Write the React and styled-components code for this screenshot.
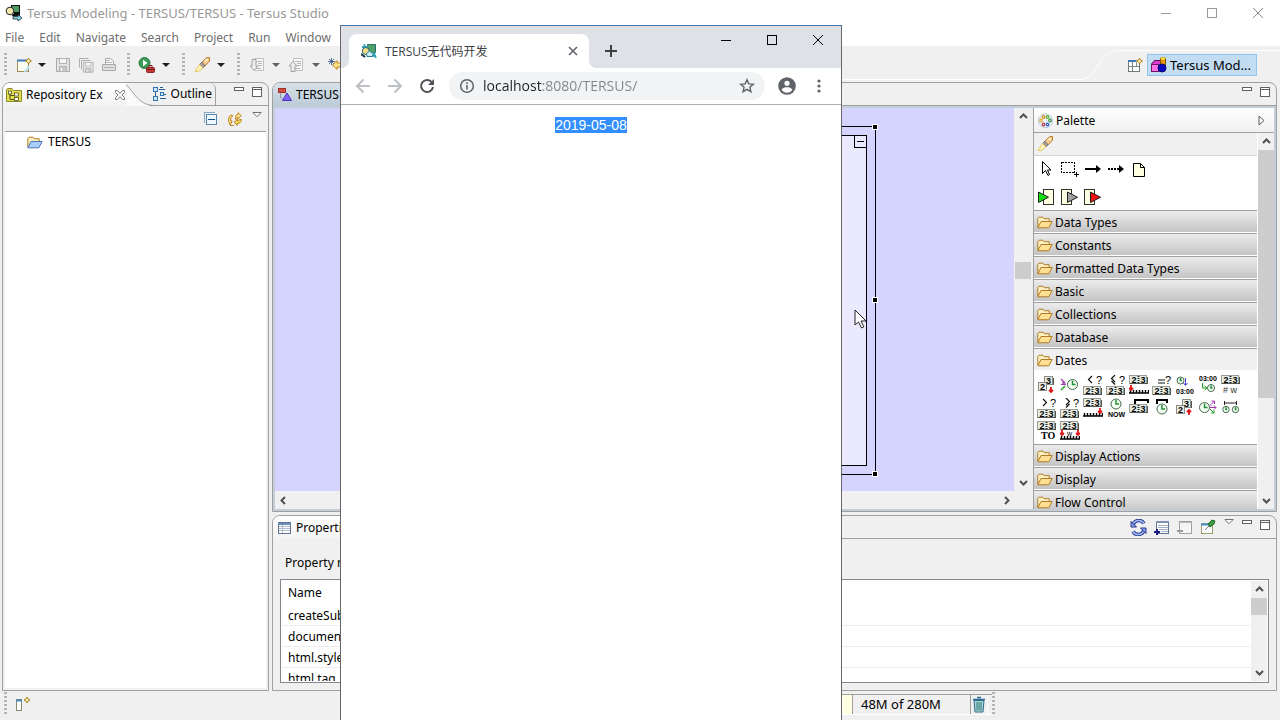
import React from "react";
import styled, { createGlobalStyle, css } from "styled-components";

const ui = `"Noto Sans", "Open Sans", "Noto Sans CJK SC", sans-serif`;
const line = "#a0a0a0";
const face = "#f0f0f0";

const Global = createGlobalStyle`
  * { box-sizing: border-box; }
  body { margin: 0; overflow: hidden; background: ${face}; font: 12px/16px ${ui}; color: #000; }
  button { font: inherit; color: inherit; padding: 0; margin: 0; border: 0; background: none; }
  svg { display: block; flex: none; }
`;

/* ---------- frame ---------- */
const Screen = styled.div`
  position: relative;
  display: flex;
  flex-direction: column;
  height: 100vh;
  overflow: hidden;
  background: ${face};
`;
const TitleBar = styled.header`
  display: flex;
  align-items: center;
  height: 26px;
  padding: 0 16px 0 5px;
  background: #fff;
  color: #999;
`;
const Title = styled.h1`
  flex: 1;
  margin: 0 0 0 4px;
  font-size: 13px;
  font-weight: 400;
`;
const WindowButtons = styled.div`
  display: flex;
  align-self: ${(p) => (p.$top ? "flex-start" : "center")};
  gap: 34px;
`;
const MenuBar = styled.nav`
  display: flex;
  align-items: center;
  gap: 15px;
  height: 20px;
  padding: 4px 5px 0;
  background: #fff;
  color: #6d6d6d;
`;
const MenuItem = styled.button`
  height: 16px;
`;
const CoolBar = styled.div`
  display: flex;
  height: 36px;
`;
const Tools = styled.div`
  display: flex;
  align-items: center;
  padding: 2px 0 0 4px;
`;
const Tool = styled.button`
  display: flex;
  align-items: center;
  justify-content: center;
  width: ${(p) => p.$w || 23}px;
  height: 20px;
`;
const Grip = styled.span`
  width: 3px;
  height: 24px;
  margin-right: ${(p) => p.$after || 8}px;
  background: repeating-linear-gradient(#b4b4b4 0 2px, transparent 2px 4px);
`;
const CoolLine = styled.div`
  flex: 1;
  height: 34px;
  border-bottom: 1px solid #fff;
`;
const Perspectives = styled.div`
  display: flex;
  align-items: center;
  gap: 4px;
  height: 28px;
  margin-top: 4px;
  padding: 0 23px 0 9px;
  border-top: 1px solid #fff;
`;
const Perspective = styled.button`
  display: flex;
  align-items: center;
  gap: 3px;
  height: 22px;
  padding: 0 5px 0 2px;
  border: 1px solid #92c5ee;
  background: #c2dcf2;
  font-size: 13px;
  white-space: nowrap;
`;
const Workbench = styled.main`
  display: grid;
  grid-template-columns: 267px minmax(0, 1fr);
  gap: 3px;
  flex: 1;
  min-height: 0;
  padding: 0 3px 0 2px;
`;
const RightSide = styled.div`
  display: flex;
  flex-direction: column;
  gap: 3px;
  min-height: 0;
`;
const Panel = styled.section`
  display: flex;
  flex-direction: column;
  flex: ${(p) => (p.$h ? `0 0 ${p.$h}px` : "1")};
  min-height: 0;
  overflow: hidden;
  border: 1px solid ${line};
  border-radius: 8px 8px 0 0;
  background: ${face};
`;
const PanelHead = styled.div`
  display: flex;
  flex: none;
  height: 23px;
`;
const Tab = styled.button`
  display: flex;
  align-items: center;
  gap: ${(p) => p.$gap || 4}px;
  height: 23px;
  padding: 0 ${(p) => p.$right || 0}px 0 ${(p) => p.$left || 3}px;
  white-space: nowrap;
  ${(p) => p.$active && css`background: linear-gradient(#fff, #f3f3f3);`}
  ${(p) => p.$editor && css`background: linear-gradient(#d7e1e9, #bccbd7);`}
`;
const TabCurve = styled.svg`
  margin: 0 -6px 0 0;
`;
const OutlineTab = styled(Tab)`
  padding-right: 3px;
  border-right: 1px solid ${line};
  border-bottom: 1px solid ${line};
  border-top-right-radius: 6px;
`;
const HeadActions = styled.div`
  display: flex;
  flex: 1;
  justify-content: flex-end;
  gap: 8px;
  padding: 3px 6px 0 0;
  border-bottom: 1px solid ${line};
`;
const ViewActions = styled.div`
  display: flex;
  gap: 7px;
`;
const ViewBar = styled.div`
  display: flex;
  flex: none;
  justify-content: flex-end;
  gap: 10px;
  height: 26px;
  margin: 0 2px;
  padding: 6px 4px 0 0;
  border-bottom: 1px solid ${line};
`;
const Tree = styled.ul`
  flex: 1;
  margin: 0 2px 2px;
  padding: 1px 0 0 22px;
  background: #fff;
  list-style: none;
`;
const TreeItem = styled.li`
  display: flex;
  align-items: center;
  gap: 5px;
  height: 18px;
`;

/* ---------- editor ---------- */
const EditorBody = styled.div`
  display: grid;
  grid-template-columns: minmax(0, 1fr) 241px;
  flex: 1;
  min-height: 0;
  padding: 2px;
  background: #c3ced9;
`;
const Diagram = styled.div`
  display: grid;
  grid-template-columns: minmax(0, 1fr) 19px;
  grid-template-rows: minmax(0, 1fr) 18px;
  min-height: 0;
  background: ${face};
`;
const Canvas = styled.div`
  position: relative;
  overflow: hidden;
  background: #d5d4ff;
`;
const Node = styled.div`
  position: absolute;
  left: ${(p) => p.$x}px;
  top: ${(p) => p.$y}px;
  width: ${(p) => p.$w}px;
  height: ${(p) => p.$h}px;
  border: 1px solid #000;
  background: ${(p) => p.$fill || "transparent"};
`;
const Collapse = styled.button`
  position: absolute;
  right: -1px;
  top: -1px;
  display: grid;
  place-items: center;
  width: 13px;
  height: 13px;
  border: 1px solid #000;
`;
const Handle = styled.span`
  position: absolute;
  left: ${(p) => p.$x}px;
  top: ${(p) => p.$y}px;
  width: 6px;
  height: 6px;
  border: 1px solid #fff;
  background: #000;
`;
const Scroll = styled.div`
  display: flex;
  flex-direction: ${(p) => (p.$row ? "row" : "column")};
  justify-content: space-between;
  flex: none;
  width: ${(p) => (p.$row ? "auto" : "16px")};
  margin: ${(p) => p.$m || "0"};
  background: ${face};
`;
const ScrollButton = styled.button`
  display: grid;
  place-items: center;
  flex: none;
  width: 16px;
  height: 17px;
`;
const ScrollTrack = styled.div`
  display: grid;
  flex: 1;
  grid-template-rows: ${(p) => p.$rows || "1fr"};
`;
const Thumb = styled.div`
  grid-row: 2;
  background: #cdcdcd;
`;

/* ---------- palette ---------- */
const Palette = styled.aside`
  display: flex;
  flex-direction: column;
  min-height: 0;
  border-left: 1px solid ${line};
  background: #fff;
`;
const PaletteHead = styled.div`
  display: flex;
  align-items: center;
  gap: 2px;
  flex: none;
  height: 25px;
  padding: 1px 8px 0 4px;
  border-bottom: 1px solid ${line};
  background: linear-gradient(#fff, ${face});
`;
const Grow = styled.span`
  flex: 1;
  min-width: ${(p) => p.$min || 0}px;
`;
const PaletteBody = styled.div`
  display: flex;
  flex: 1;
  min-height: 0;
`;
const Drawers = styled.div`
  flex: 1;
  overflow: hidden;
`;
const BrushRow = styled.div`
  height: 23px;
  padding: 3px;
  border-bottom: 1px solid #d4d4d4;
  background: ${face};
`;
const ToolSet = styled.div`
  display: grid;
  gap: 7px;
  height: 54px;
  padding: 3px;
`;
const ToolRow = styled.div`
  display: flex;
  gap: 3px;
`;
const IconGrid = styled.div`
  display: flex;
  flex-wrap: wrap;
  align-content: flex-start;
  gap: 3px;
  height: 73px;
  padding: 4px 3px 0;
`;
const IconButton = styled.button`
  width: 20px;
  height: 20px;
`;
const Drawer = styled.button`
  display: flex;
  align-items: center;
  gap: 2px;
  width: 100%;
  height: 23px;
  padding: 2px 0 0 3px;
  border-top: 1px solid ${line};
  border-bottom: 1px solid #fff;
  background: ${(p) => (p.$open ? face : "linear-gradient(#ececec, #c4c4c4)")};
`;

/* ---------- properties ---------- */
const FilterLabel = styled.p`
  flex: none;
  margin: 0;
  padding: 16px 0 8px 12px;
`;
const TableFrame = styled.div`
  display: flex;
  flex: 1;
  min-height: 0;
  margin: 0 7px 7px;
  padding: 1px;
  overflow: hidden;
  border: 1px solid #828790;
  background: #fff;
`;
const TableClip = styled.div`
  flex: 1;
  overflow: hidden;
`;
const Table = styled.table`
  width: 100%;
  border-collapse: collapse;
  th, td { padding: 0 0 0 6px; text-align: left; font-weight: 400; height: 21px; }
  th { height: 23px; }
  td { padding-top: 3px; border-bottom: 1px solid #ececec; }
`;

/* ---------- status bar ---------- */
const StatusBar = styled.footer`
  display: flex;
  align-items: center;
  height: 29px;
  padding: 0 284px 3px 4px;
`;
const Heap = styled.div`
  display: flex;
  height: 21px;
  border-top: 1px solid ${line};
  border-bottom: 1px solid #fff;
`;
const HeapUsed = styled.span`
  width: 60px;
  border-right: 1px solid ${line};
  background: #ffffe1;
`;
const HeapText = styled.span`
  width: 118px;
  padding: 1px 0 0 8px;
  border-right: 1px solid ${line};
  font-size: 13px;
`;
const Trash = styled.button`
  width: 17px;
  padding: 1px 1px 0;
  margin-right: 4px;
  border-right: 1px solid #fff;
`;

/* ---------- browser ---------- */
const Browser = styled.section`
  position: absolute;
  left: 340px;
  top: 25px;
  bottom: 0;
  width: 502px;
  display: flex;
  flex-direction: column;
  border: 1px solid #68686c;
  border-top-color: #3c78b4;
  border-bottom: 0;
  background: #fff;
  font-family: "Open Sans", "Noto Sans CJK SC", sans-serif;
`;
const Strip = styled.div`
  display: flex;
  flex: none;
  height: 42px;
  padding: 8px 17px 0 0;
  background: #dee1e6;
`;
const Foot = styled.span`
  align-self: flex-end;
  width: 8px;
  height: 8px;
  background: radial-gradient(circle at ${(p) => (p.$right ? "100%" : "0")} 0, #dee1e6 8px, #fff 8px);
`;
const BrowserTab = styled.div`
  display: flex;
  align-items: center;
  width: 240px;
  height: 34px;
  padding: 0 10px 0 12px;
  border-radius: 8px 8px 0 0;
  background: #fff;
  color: #3c4043;
`;
const TabTitle = styled.span`
  flex: 1;
  margin-left: 8px;
  padding-top: 2px;
`;
const NewTab = styled.button`
  height: 34px;
  margin-left: 8px;
`;
const NavBar = styled.div`
  display: flex;
  align-items: center;
  flex: none;
  height: 37px;
  padding: 0 14px;
  border-bottom: 1px solid #b0b0b2;
`;
const NavButton = styled.button`
  margin: 0 ${(p) => p.$after || 0}px 0 ${(p) => p.$before || 0}px;
`;
const Omnibox = styled.label`
  display: flex;
  align-items: center;
  flex: 1;
  height: 28px;
  padding: 0 10px;
  border-radius: 14px;
  background: #f1f3f4;
`;
const Url = styled.input`
  flex: 1;
  min-width: 0;
  margin: 0 0 0 8px;
  padding: 0;
  border: 0;
  outline: 0;
  background: linear-gradient(90deg, #202124 60px, #80868b 60px);
  -webkit-background-clip: text;
  background-clip: text;
  -webkit-text-fill-color: transparent;
  font: 14px/20px "Open Sans", sans-serif;
`;
const Page = styled.div`
  padding-top: 12px;
  text-align: center;
  font: 14px/16px "Liberation Sans", Arial, sans-serif;
`;
const Selected = styled.span`
  background: #338fff;
  color: #fff;
`;
const Pointer = styled.svg`
  position: absolute;
  left: 854px;
  top: 309px;
`;

/* ---------- icons ---------- */
const Svg = ({ w = 16, h = 16, crisp, children, ...rest }) => (
  <svg width={w} height={h} viewBox={`0 0 ${w} ${h}`} fill="none" shapeRendering={crisp ? "crispEdges" : undefined} aria-hidden="true" {...rest}>
    {children}
  </svg>
);
const WinMin = ({ c }) => <Svg w={12} h={12} crisp><path d="M1 6.5h10" stroke={c} /></Svg>;
const WinMax = ({ c }) => <Svg w={12} h={12} crisp><rect x="1.500" y="1.500" width="9" height="9" stroke={c} /></Svg>;
const WinClose = ({ c }) => <Svg w={12} h={12}><path d="M1 1l10 10M11 1L1 11" stroke={c} /></Svg>;
const Caret = ({ c = "#202020" }) => <Svg w={8} h={4}><path d="M0 0h8L4 4z" fill={c} /></Svg>;
const MinView = () => <Svg w={10} h={13} crisp><rect x=".5" y="1.500" width="9" height="3" fill="#fff" stroke="#606060" /></Svg>;
const MaxView = () => <Svg w={10} h={13} crisp><rect x=".5" y="1.500" width="9" height="9" fill="#fff" stroke="#606060" /><path d="M0 3.500h10" stroke="#606060" /></Svg>;
const ViewMenu = () => <Svg w={10} h={6}><path d="M.8.5h8.400L5 4.700z" fill="#fff" stroke="#707070" /></Svg>;
const Chevron = ({ d = 0 }) => (
  <Svg w={9} h={9}><g transform={`rotate(${d} 4.500 4.500)`}><path d="M1 6l3.500-3.500L8 6" stroke="#505050" strokeWidth="2" /></g></Svg>
);
const AppIcon = () => (
  <Svg w={18} h={18}>
    <rect x="6.500" y="1.500" width="8" height="7" fill="#4f9a62" stroke="#111" />
    <circle cx="5" cy="7" r="3.800" fill="#f5e9b0" stroke="#222" />
    <path d="M7 11l3-2.500 5 .5v3H7z" fill="#111" />
    <path d="M8 12.500h5v-2l4 3.500-4 3v-2H8z" fill="#7fd8ee" stroke="#222" strokeWidth=".8" />
  </Svg>
);
const spark = (x, y, s = 3) => (
  <path d={`M${x} ${y - s}l1 ${s - 1} ${s - 1} 1-${s - 1} 1-1 ${s - 1}-1-${s - 1}-${s - 1}-1 ${s - 1}-1z`} fill="#fff6c0" stroke="#b08420" />
);
const NewIcon = () => (
  <Svg><rect x="1.500" y="3.500" width="11" height="11" fill="#fbfdf2" stroke="#a08a50" /><path d="M1 3.500h11" stroke="#3d79b8" strokeWidth="2" /><path d="M8 14c3 0 4-2 4-5" stroke="#bfe3ef" strokeWidth="2" />{spark(12.500, 4)}</Svg>
);
const Floppy = ({ x = 0, y = 0 }) => (
  <g transform={`translate(${x} ${y})`}><path d="M.5.5h13v13H.5z" fill="#e4e4e4" stroke="#a9a9a9" /><rect x="3.500" y=".5" width="7" height="5" fill="#f6f6f6" stroke="#b4b4b4" /><rect x="3.500" y="8.500" width="7" height="5" fill="#c9c9c9" stroke="#b4b4b4" /><path d="M5.500 10v3" stroke="#fff" /></g>
);
const SaveIcon = () => <Svg><Floppy x={1} y={1} /></Svg>;
const SaveAllIcon = () => (
  <Svg><path d="M1.500 10.500v-9h9M3.500 12.500v-9h9" stroke="#b0b0b0" /><g transform="translate(5 5) scale(.75)"><Floppy /></g></Svg>
);
const PrintIcon = () => (
  <Svg><path d="M4.500 7V1.500h5l3 2.500v3" fill="#fafafa" stroke="#ababab" /><path d="M1.500 7.500h13v6h-13z" fill="#dedede" stroke="#a9a9a9" /><path d="M3 10.500h10M5 3.500h4M5 5.500h6" stroke="#b4b4b4" /></Svg>
);
const RunIcon = () => (
  <Svg w={18} h={16}><circle cx="6.500" cy="6" r="5.500" fill="#3b9b56" stroke="#2b7f45" /><path d="M5 2.800l4.500 3.200L5 9.200z" fill="#fff" /><rect x="8.500" y="10.500" width="8" height="5" rx="1" fill="#c5383a" stroke="#972427" /><path d="M11 10V8.500h3V10M9 12.500h7" stroke="#7c1b1f" /></Svg>
);
const BrushIcon = () => (
  <Svg w={17} h={16}><path d="M8 5l5-4.500h2.500V4L11 9z" fill="#f7cf90" stroke="#b97b31" /><path d="M5.500 7.500L8 5l3 4-2.500 2z" fill="#a8a0a0" stroke="#857c7c" /><path d="M5.500 7.500L1 14.500h3L9 11z" fill="#fff7bb" stroke="#e2bb4c" strokeWidth=".8" /><circle cx="12.500" cy="3" r="1" fill="#fff" /></Svg>
);
const StepIcon = ({ up }) => (
  <Svg><path d="M5.500 1.500h9v12h-9z" fill="#f8f8f8" stroke="#c0c0c0" /><path d="M7 4.500h6M9 6.500h4M9 8.500h4M7 11.500h5" stroke="#b5b5b5" /><path d={up ? "M3 14.500V9H1l4-4.500L9 9H7v5.500z" : "M3 2.500V9H1l4 4.500L9 9H7V2.500z"} fill="#ececec" stroke="#a4a4a4" /></Svg>
);
const BackIcon = () => (
  <Svg><path d="M1 2l5 5M6 2L1 7M3.500 1v7M0 4.500h7" stroke="#2f4f86" strokeWidth=".8" /><path d="M4.500 8L9 3.500V6h6v4H9v2.500z" fill="#ffe08a" stroke="#b98218" /></Svg>
);
const OpenPerspectiveIcon = () => (
  <Svg><rect x="1.500" y="3.500" width="11" height="11" fill="#fff" stroke="#6f7f78" /><path d="M1 4h8" stroke="#3f78b4" strokeWidth="2" /><path d="M5.500 5v9M2 9.500h10M9.500 5v4" stroke="#748a86" />{spark(12.500, 4)}</Svg>
);
const TersusIcon = () => (
  <Svg w={17} h={17}><path d="M1.500 8l3-3.500h7V12l-3 3.500h-7z" fill="#e03bd0" stroke="#5c0b55" /><rect x="1.500" y="8.500" width="7" height="7" fill="#ff6fe8" stroke="#6d1466" /><rect x="10.500" y="1.500" width="5" height="11" rx="1.500" fill="#e99613" stroke="#7a4f00" /><ellipse cx="13" cy="2.500" rx="2.500" ry="1.200" fill="#ffe04a" /><circle cx="12" cy="12" r="4" fill="#0a0ac0" stroke="#04046a" /></Svg>
);
const RepoIcon = () => (
  <Svg><path d="M.5 2.500l1.500-1h4l1.500 2h8v11H.5z" fill="#e3df4c" stroke="#8d8a2e" /><path d="M4 5v7.500h4M4 8.500h4" stroke="#555322" /><rect x="2.500" y="4" width="3" height="3" fill="#fffef0" stroke="#555322" strokeWidth=".8" /><rect x="8.500" y="6" width="4" height="3" fill="#fffef0" stroke="#555322" strokeWidth=".8" /><rect x="8.500" y="10.500" width="4" height="3" fill="#fffef0" stroke="#555322" strokeWidth=".8" /></Svg>
);
const TabClose = () => (
  <Svg w={12} h={12}><path d="M1.500 1.500h2L6 4.300l2.500-2.800h2v1.800L8 6l2.500 2.700v1.800h-2L6 7.700l-2.500 2.800h-2V8.700L4 6 1.500 3.300z" fill="#fff" stroke="#777" /></Svg>
);
const OutlineIcon = () => (
  <Svg w={15} h={16} crisp><rect x="1.500" y="1.500" width="4" height="4" fill="#cfe8fa" stroke="#2f74b5" /><rect x="1.500" y="10.500" width="4" height="4" fill="#cfe8fa" stroke="#2f74b5" /><rect x="8.500" y="6.500" width="3" height="3" fill="#cfe8fa" stroke="#2f74b5" /><path d="M7 3.500h6M8 12.500h6M12 8.500h2M3.500 6v4M8 1.500h3" stroke="#27588e" /></Svg>
);
const CollapseIcon = () => (
  <Svg w={14} h={14} crisp><path d="M.5 10.500v-10h10" stroke="#88a8c4" /><rect x="2.500" y="2.500" width="10" height="10" fill="#eef7ff" stroke="#5b87ad" /><path d="M4 7.500h7" stroke="#16508c" strokeWidth="1" /></Svg>
);
const LinkIcon = () => (
  <Svg w={14} h={15}>
    <path d="M7.500 5.500C7.500 3 9 2.500 10 2.500V.7l3.300 3L10 6.800V5c-.8 0-1 .5-1 2.500l-1.500-.3z" fill="#ffe292" stroke="#b9851f" />
    <path d="M13.300 7.500c0 3-1.800 4-4 4v1.800L6 10.300 9.300 7.500V9c1.200 0 2-.3 2-1.500z" fill="#ffd65e" stroke="#b9851f" />
    <path d="M.7 7c0-3 1.800-4 3.600-4V4.800c-1 0-1.600.8-1.600 2.200v2h1.500L2.200 13 .5 9z" fill="#ffe292" stroke="#b9851f" />
    <path d="M2 13.500h4" stroke="#b9851f" />
  </Svg>
);
const Folder = ({ blue }) => (
  <Svg w={16} h={13}><path d="M.8 11V2.500L2 1.200h4l1.200 1.500h5V5" fill="#fdf0c2" stroke="#b07a26" /><path d="M.8 11.800L4 5.500h11.200l-3.400 6.300z" fill={blue ? "#a9cdf6" : "#ffdf92"} stroke={blue ? "#4a74b5" : "#b07a26"} /></Svg>
);
const ModelIcon = () => (
  <Svg w={14} h={15}><rect x=".5" y="1.500" width="7" height="4" fill="#d2483d" stroke="#a2302a" /><path d="M9 6l4.500 7.500h-9z" fill="#7d63f0" stroke="#4b31c0" /><path d="M2.500 6v5h2" stroke="#8c97ab" /></Svg>
);
const TableIcon = () => (
  <Svg w={13} h={12} crisp><rect x=".5" y=".5" width="12" height="11" fill="#fff" stroke="#5f7392" /><path d="M0 1.500h13" stroke="#6d8db8" strokeWidth="2" /><path d="M1 4.500h11M1 6.500h11M1 8.500h11M4.500 3v8" stroke="#aebccd" /></Svg>
);
const AddRowIcon = () => (
  <Svg crisp><rect x="2.500" y="2.500" width="12" height="12" fill="#fff" stroke="#5f7392" /><path d="M2 3h13" stroke="#7d94b5" strokeWidth="2" /><path d="M4 6.500h10M4 8.500h10M5 10.500h9M7 12.500h7" stroke="#9fb0c6" /><path d="M0 13h6M3 10v6" stroke="#1a1a80" strokeWidth="2" /></Svg>
);
const DelRowIcon = () => (
  <Svg crisp><rect x="2.500" y="2.500" width="12" height="12" fill="#f4f4f4" stroke="#a2a2a2" /><path d="M2 3.500h13" stroke="#b6b6b6" /><path d="M0 12h6" stroke="#9a9a9a" strokeWidth="2" /></Svg>
);
const PinIcon = () => (
  <Svg><rect x="1.500" y="4.500" width="11" height="10" fill="#f7fbff" stroke="#a49a6a" /><path d="M1 5.500h10" stroke="#4b8fd0" strokeWidth="2" /><path d="M5 11l5-5" stroke="#777" /><path d="M8 5l4-4 3 1-1 3-4 3z" fill="#3d9b46" stroke="#1f6b2a" /></Svg>
);
const RefreshIcon = () => (
  <Svg w={17} h={17}><path d="M3 6a6 6 0 0 1 11-1.500M14 11a6 6 0 0 1-11 1.500" stroke="#26388f" strokeWidth="3.500" /><path d="M3 6a6 6 0 0 1 11-1.500M14 11a6 6 0 0 1-11 1.500" stroke="#a3baf5" strokeWidth="1.500" /><path d="M1 2.500V8h5.500zM16 14.500V9h-5.500z" fill="#8ba5ec" stroke="#26388f" /></Svg>
);
const PaletteIcon = () => {
  const dots = [["#e08a1c", 5.500, 4], ["#5fae2c", 9.500, 4], ["#3b9c3b", 12, 7.500], ["#2f5fc4", 9.500, 11.500], ["#c43b3b", 5.500, 11.500], ["#e0b02c", 3, 7.500]];
  return <Svg><circle cx="7.500" cy="7.800" r="7" fill="#eaf1fb" stroke="#b9c9de" />{dots.map(([c, x, y]) => <circle key={c} cx={x} cy={y} r="1.300" stroke={c} strokeWidth="1.200" />)}</Svg>;
};
const TrashIcon = () => (
  <Svg w={14} h={17}><path d="M2 4.500h10l-1 11.500H3z" fill="#a9d6c8" stroke="#2f6c94" /><path d="M1 3.500h12M5 1.500h4" stroke="#2f6c94" strokeWidth="1.600" /><path d="M5 6v8.500M7 6v8.500M9 6v8.500" stroke="#2d7a86" /></Svg>
);
const FastViewIcon = () => (
  <Svg><rect x="1.500" y="3.500" width="5" height="11" fill="#fff" stroke="#8a8a70" /><path d="M1 4.500h6" stroke="#4b86c0" strokeWidth="2" />{spark(12, 4)}</Svg>
);
const Favicon = () => (
  <Svg>
    <path d="M6.500 1.500h8v8h-8z" fill="#4fa06a" stroke="#2a6f6a" />
    <path d="M3.500 1v4M1 4h6M12 9v5M9 13h6M13 10l2 5" stroke="#35a5bd" strokeWidth="1.800" />
    <circle cx="4.800" cy="8" r="3.500" fill="#f0dc86" stroke="#2c5f6c" />
    <path d="M5.500 10.500l3-2.500 4 3-1.500 2.500h-5z" fill="#c8edf5" stroke="#2a7f96" />
    <path d="M0 11l4 3" stroke="#123c46" strokeWidth="2" />
  </Svg>
);

/* palette tools */
const T = (p) => <Svg w={20} h={20} {...p} />;
const tools = [
  ["Select", <T><path d="M5.500 2.500v12l3-3 2.500 5 1.500-1-2-4.500h3.500z" fill="#fff" stroke="#000" /></T>],
  ["Marquee", <T crisp><rect x="1.500" y="3.500" width="13" height="10" stroke="#000" strokeDasharray="2 1" /><path d="M14 15.500h5M16.500 13v5" stroke="#000" /></T>],
  ["Flow", <T><path d="M2 10h12" stroke="#000" strokeWidth="2" /><path d="M13 6l5 4-5 4z" fill="#000" /></T>],
  ["Dashed flow", <T><path d="M2 10h12" stroke="#000" strokeWidth="2" strokeDasharray="2 1" /><path d="M13 6l5 4-5 4z" fill="#000" /></T>],
  ["Note", <T><path d="M4.500 4.500h7l4 4v9h-11z" fill="#ffffe1" stroke="#000" /><path d="M11.500 4.500v4h4" stroke="#000" /></T>],
];
const slot = (fill, inside) => (
  <T><rect x={inside ? 6.500 : 1.500} y="2.500" width="10" height="15" fill="#ffffe1" stroke="#303030" /><path d={inside ? "M1.500 5v10.500l10-5.250z" : "M7.500 5v10.500l10-5.250z"} fill={fill} stroke="#202020" /></T>
);
const slots = [["Trigger", slot("#12e012", true)], ["Input", slot("#a0a0a0")], ["Exit", slot("#f01010")]];

/* date action icons, built from a flip calendar, a clock and small marks */
const Mark = ({ x, y, s = 7, w = 700, c = "#000", children }) => (
  <text x={x} y={y} fontSize={s} fontWeight={w} fontFamily="Liberation Sans, sans-serif" fill={c}>{children}</text>
);
const Cal = ({ x = 0, y = 0 }) => (
  <g transform={`translate(${x} ${y})`}>
    <rect x=".5" y=".5" width="17" height="8" fill="#e6ece4" stroke="#9a9c92" shapeRendering="crispEdges" />
    <path d="M18.500 2v6M1 8.500h18" stroke="#55574f" shapeRendering="crispEdges" />
    <path d="M9.500 1v8" stroke="#222" strokeDasharray="1 1" strokeWidth="2" />
    <Mark x={2.500} y={7.500} s={9}>2</Mark>
    <Mark x={11.500} y={7.500} s={9}>3</Mark>
  </g>
);
const Split = () => (
  <g>
    <rect x="7.500" y="1.500" width="8" height="8" fill="#e6ece4" stroke="#8b8d85" />
    <path d="M16.500 3v7" stroke="#55574f" />
    <rect x="1.500" y="7.500" width="8" height="8" fill="#e6ece4" stroke="#8b8d85" />
    <Mark x={9} y={8.500} s={9}>3</Mark>
    <Mark x={3} y={14.500} s={9}>2</Mark>
  </g>
);
const Clock = ({ x, y, r = 5 }) => (
  <g stroke="#1f9136"><circle cx={x} cy={y} r={r} fill="#f4fff4" stroke="#44684c" /><path d={`M${x} ${y - r + 1}V${y}h${r - 2}`} strokeWidth="1.500" /></g>
);
const Ruler = ({ y }) => <path d={`M0 ${y + 3}h20M1.500 ${y}v3M4.500 ${y}v3M7.500 ${y}v3M10.500 ${y}v3M13.500 ${y}v3M16.500 ${y}v3M19.500 ${y}v3`} stroke="#000" strokeWidth="1.400" />;
const Arrow = ({ x, y, up }) => <path d={up ? `M${x} ${y + 6}V${y + 1}M${x - 2} ${y + 3}l2-2 2 2` : `M${x} ${y}v5M${x - 2} ${y + 3}l2 2 2-2`} stroke="#e01818" strokeWidth="1.800" />;
const cmp = (d) => (<T><path d={d} stroke="#111" strokeWidth="1.200" /><Mark x={13} y={8.500} s={11} w={400}>?</Mark><Cal y={11} /></T>);
const dates = [
  ["Create date", <T><Split /><Arrow x={14} y={12} /></T>],
  ["Create time", <T><path d="M1 4l4 4M1 9.500h5M3 6v3h3" stroke="#a33bb0" strokeWidth="1.200" /><path d="M1 15l4-4" stroke="#22a022" strokeWidth="1.500" /><Clock x={12.500} y={9.500} /></T>],
  ["Before", cmp("M9 1L5.500 4.500 9 8")],
  ["Before or equal", cmp("M9 0L5.500 3.500 9 7M5.500 6l3.500 3.500")],
  ["First day", <T><Cal /><Ruler y={15} /><Arrow x={2} y={10} /></T>],
  ["Equal", cmp("M6 5h7M6 8h7")],
  ["Format time", <T><Clock x={5.500} y={5.500} r={3.500} /><path d="M10.500 3v7M8.500 8l2 2.500 2-2.500" stroke="#4444cc" /><Mark x={1} y={18.500} s={7}>03:00</Mark></T>],
  ["Parse time", <T><Mark x={1} y={6} s={7}>03:00</Mark><path d="M4.500 8v5h4M6.500 11l2.500 2-2.500 2" stroke="#22a022" /><Clock x={13} y={13} r={3.500} /></T>],
  ["Week number", <T><Cal /><Mark x={2} y={18} s={9} w={400} c="#333"># w</Mark></T>],
  ["After", cmp("M6 1l3.500 3.500L6 8")],
  ["After or equal", cmp("M6 0l3.500 3.500L6 7M9.500 6L6 9.500")],
  ["Last day", <T><Cal /><Ruler y={15} /><Arrow x={17} y={10} /></T>],
  ["Now", <T><Clock x={10} y={6} /><Mark x={2} y={19} s={7}>NOW</Mark></T>],
  ["Add to date", <T><Cal y={6} /><path d="M6 6V2h13v3" stroke="#000" strokeWidth="2" /></T>],
  ["Add to time", <T><Clock x={10} y={11} /><path d="M5 6V2h10v3" stroke="#000" strokeWidth="2" /></T>],
  ["Split date", <T><Split /><Arrow x={14} y={11} up /></T>],
  ["Split time", <T><Clock x={6.500} y={9.500} /><path d="M11.500 8l5-5M13.500 3h3v3M12 9.500h6M16 7.500l2 2-2 2" stroke="#a33bb0" /><path d="M12 11l4 4M16 12v3h-3" stroke="#22a022" /></T>],
  ["Time difference", <T><path d="M3 5h13M3.500 3v4M15.500 3v4" stroke="#222" /><Clock x={5} y={11.500} r={3.200} /><Clock x={14.500} y={11.500} r={3.200} /></T>],
  ["Day to", <T><Cal /><text x="4" y="18" fontSize="10" fontWeight="700" fontFamily="Liberation Serif, serif" fill="#000">TO</text></T>],
  ["Week range", <T><Cal /><Ruler y={15} /><Arrow x={2} y={9} /><Arrow x={18} y={9} /><Mark x={7} y={15} s={7} w={400}>w</Mark></T>],
];

const drawersAbove = ["Data Types", "Constants", "Formatted Data Types", "Basic", "Collections", "Database"];
const drawersBelow = ["Display Actions", "Display", "Flow Control"];
const menu = ["File", "Edit", "Navigate", "Search", "Project", "Run", "Window"];
const attributes = ["createSubmit", "document", "html.style", "html.tag"];

function VScroll({ rows, m }) {
  return (
    <Scroll $m={m}>
      <ScrollButton aria-label="Scroll up"><Chevron /></ScrollButton>
      <ScrollTrack $rows={rows}><Thumb /></ScrollTrack>
      <ScrollButton aria-label="Scroll down"><Chevron d={180} /></ScrollButton>
    </Scroll>
  );
}
const DrawerHead = ({ name, open }) => <Drawer $open={open}><Folder />{name}</Drawer>;

export default function App() {
  return (
    <Screen>
      <Global />
      <TitleBar>
        <AppIcon />
        <Title>Tersus Modeling - TERSUS/TERSUS - Tersus Studio</Title>
        <WindowButtons>
          <button aria-label="Minimize"><WinMin c="#999" /></button>
          <button aria-label="Maximize"><WinMax c="#999" /></button>
          <button aria-label="Close"><WinClose c="#888" /></button>
        </WindowButtons>
      </TitleBar>
      <MenuBar>{menu.map((m) => <MenuItem key={m}>{m}</MenuItem>)}</MenuBar>
      <CoolBar>
        <Tools>
          <Grip />
          <Tool aria-label="New" $w={18}><NewIcon /></Tool>
          <Tool aria-label="New menu" $w={18}><Caret /></Tool>
          <Tool aria-label="Save"><SaveIcon /></Tool>
          <Tool aria-label="Save all"><SaveAllIcon /></Tool>
          <Tool aria-label="Print"><PrintIcon /></Tool>
          <Tool as="span" $w={7} />
          <Grip />
          <Tool aria-label="Run" $w={18}><RunIcon /></Tool>
          <Tool aria-label="Run menu" $w={20}><Caret /></Tool>
          <Tool as="span" $w={6} />
          <Grip />
          <Tool aria-label="Format" $w={18}><BrushIcon /></Tool>
          <Tool aria-label="Format menu" $w={20}><Caret /></Tool>
          <Tool as="span" $w={6} />
          <Grip />
          <Tool aria-label="Next" $w={18}><StepIcon /></Tool>
          <Tool aria-label="Next menu" $w={20}><Caret c="#606060" /></Tool>
          <Tool aria-label="Previous" $w={20}><StepIcon up /></Tool>
          <Tool aria-label="Previous menu" $w={20}><Caret c="#606060" /></Tool>
          <Tool aria-label="Back" $w={20}><BackIcon /></Tool>
        </Tools>
        <CoolLine />
        <Svg w={36} h={36}><path d="M0 33.500c8-1 12-7 16-14s10-15 20-15" stroke="#fff" /></Svg>
        <Perspectives>
          <button aria-label="Open perspective"><OpenPerspectiveIcon /></button>
          <Perspective><TersusIcon />Tersus Mod...</Perspective>
        </Perspectives>
      </CoolBar>

      <Workbench>
        <Panel>
          <PanelHead>
            <Tab $active $gap={4}><RepoIcon />Repository Ex<Grow $min={3} /><TabClose /></Tab>
            <TabCurve width="29" height="23" viewBox="3 0 29 23" fill="none" aria-hidden="true">
              <path d="M-4 -.5c14 0 14 23 36 23V23H-4z" fill="#fafafa" />
              <path d="M-4 -.5c14 0 14 23 36 23" stroke={line} />
            </TabCurve>
            <OutlineTab $left={3} $gap={4}><OutlineIcon />Outline</OutlineTab>
            <HeadActions><MinView /><MaxView /></HeadActions>
          </PanelHead>
          <ViewBar><CollapseIcon /><LinkIcon /><ViewMenu /></ViewBar>
          <Tree><TreeItem><Folder blue />TERSUS</TreeItem></Tree>
        </Panel>

        <RightSide>
          <Panel>
            <PanelHead>
              <Tab $editor $left={5} $right={30}><ModelIcon />TERSUS</Tab>
              <HeadActions><MinView /><MaxView /></HeadActions>
            </PanelHead>
            <EditorBody>
              <Diagram>
                <Canvas>
                  <Node $x={80} $y={18} $w={521} $h={349} />
                  <Node $x={88} $y={27} $w={504} $h={331} $fill="#ebe9fd">
                    <Collapse aria-label="Collapse"><Svg w={7} h={1} crisp><path d="M0 .5h7" stroke="#000" /></Svg></Collapse>
                  </Node>
                  <Handle $x={597} $y={16} />
                  <Handle $x={597} $y={189} />
                  <Handle $x={597} $y={363} />
                </Canvas>
                <VScroll rows="137fr 17px 196fr" m="0 2px 0 1px" />
                <Scroll $row $m="1px 0 0">
                  <ScrollButton aria-label="Scroll left"><Chevron d={-90} /></ScrollButton>
                  <ScrollButton aria-label="Scroll right"><Chevron d={90} /></ScrollButton>
                </Scroll>
              </Diagram>
              <Palette>
                <PaletteHead><PaletteIcon />Palette<Grow /><Svg w={8} h={11}><path d="M1 1v9l5-4.500z" stroke="#606060" /></Svg></PaletteHead>
                <PaletteBody>
                  <Drawers>
                    <BrushRow><BrushIcon /></BrushRow>
                    <ToolSet>
                      <ToolRow>{tools.map(([n, i]) => <IconButton key={n} aria-label={n}>{i}</IconButton>)}</ToolRow>
                      <ToolRow>{slots.map(([n, i]) => <IconButton key={n} aria-label={n}>{i}</IconButton>)}</ToolRow>
                    </ToolSet>
                    {drawersAbove.map((d) => <DrawerHead key={d} name={d} />)}
                    <DrawerHead name="Dates" open />
                    <IconGrid>{dates.map(([n, i]) => <IconButton key={n} aria-label={n}>{i}</IconButton>)}</IconGrid>
                    {drawersBelow.map((d) => <DrawerHead key={d} name={d} />)}
                  </Drawers>
                  <VScroll rows="0 248fr 94fr" m="0 0 0 1px" />
                </PaletteBody>
              </Palette>
            </EditorBody>
          </Panel>

          <Panel $h={176}>
            <PanelHead>
              <Tab $active $left={5} $gap={5} $right={30}><TableIcon />Properties</Tab>
              <HeadActions>
                <ViewActions><RefreshIcon /><AddRowIcon /><DelRowIcon /><PinIcon /></ViewActions>
                <ViewMenu /><MinView /><MaxView />
              </HeadActions>
            </PanelHead>
            <FilterLabel>Property n</FilterLabel>
            <TableFrame>
              <TableClip>
                <Table>
                  <thead><tr><th>Name</th></tr></thead>
                  <tbody>{attributes.map((a) => <tr key={a}><td>{a}</td></tr>)}</tbody>
                </Table>
              </TableClip>
              <VScroll rows="0 17px 1fr" m="0 0 0 1px" />
            </TableFrame>
          </Panel>
        </RightSide>
      </Workbench>

      <StatusBar>
        <Grip />
        <FastViewIcon />
        <Grow />
        <Heap>
          <HeapUsed />
          <HeapText>48M of 280M</HeapText>
          <Trash aria-label="Run garbage collector"><TrashIcon /></Trash>
        </Heap>
        <Grip $after={1} />
      </StatusBar>

      <Browser>
        <Strip>
          <Foot />
          <BrowserTab>
            <Favicon />
            <TabTitle>TERSUS无代码开发</TabTitle>
            <button aria-label="Close tab"><Svg w={12} h={12}><path d="M2 2l8 8M10 2l-8 8" stroke="#5f6368" strokeWidth="1.600" /></Svg></button>
          </BrowserTab>
          <Foot $right />
          <NewTab aria-label="New tab"><Svg w={12} h={12}><path d="M6 0v12M0 6h12" stroke="#3c4043" strokeWidth="2" /></Svg></NewTab>
          <Grow />
          <WindowButtons $top>
            <button aria-label="Minimize browser"><WinMin c="#000" /></button>
            <button aria-label="Maximize browser"><WinMax c="#000" /></button>
            <button aria-label="Close browser"><WinClose c="#000" /></button>
          </WindowButtons>
        </Strip>
        <NavBar>
          <NavButton aria-label="Back" $after={16}><Svg><path d="M15 8H2M8.500 1.500L2 8l6.500 6.500" stroke="#bdc1c6" strokeWidth="2" /></Svg></NavButton>
          <NavButton aria-label="Forward" $after={16}><Svg><path d="M1 8h13M7.500 1.500L14 8l-6.500 6.500" stroke="#bdc1c6" strokeWidth="2" /></Svg></NavButton>
          <NavButton aria-label="Reload" $after={14}><Svg><path d="M13 4.500A6 6 0 1 0 14 9" stroke="#4f5357" strokeWidth="2" /><path d="M15 1v6H9z" fill="#4f5357" /></Svg></NavButton>
          <Omnibox>
            <Svg><circle cx="8" cy="8" r="6.300" stroke="#5f6368" strokeWidth="1.500" /><path d="M8 7v4.500M8 4.300v1.600" stroke="#5f6368" strokeWidth="1.600" /></Svg>
            <Url aria-label="Address" defaultValue="localhost:8080/TERSUS/" />
            <Svg><path d="M8 1.800l1.800 4.100 4.500.4-3.400 3 1 4.400L8 11.400l-3.900 2.300 1-4.400-3.400-3 4.500-.4z" stroke="#5f6368" strokeWidth="1.400" /></Svg>
          </Omnibox>
          <NavButton aria-label="Profile" $before={12} $after={14}>
            <Svg w={20} h={18}><circle cx="10" cy="9" r="8.800" fill="#5f6368" /><circle cx="10" cy="6.300" r="2.600" fill="#fff" /><path d="M4.600 12.800c1-2 3.400-2.600 5.400-2.600s4.400.6 5.400 2.600a6.500 6.500 0 0 1-10.800 0z" fill="#fff" /></Svg>
          </NavButton>
          <NavButton aria-label="Menu"><Svg w={16}><g fill="#5f6368"><circle cx="8" cy="3" r="1.600" /><circle cx="8" cy="8" r="1.600" /><circle cx="8" cy="13" r="1.600" /></g></Svg></NavButton>
        </NavBar>
        <Page><Selected>2019-05-08</Selected></Page>
      </Browser>

      <Pointer width="13" height="20" viewBox="0 0 13 20" aria-hidden="true">
        <path d="M1 1v15l3.500-3 3 6 2.300-1.200L7 12h5z" fill="#fff" stroke="#222" />
      </Pointer>
    </Screen>
  );
}
